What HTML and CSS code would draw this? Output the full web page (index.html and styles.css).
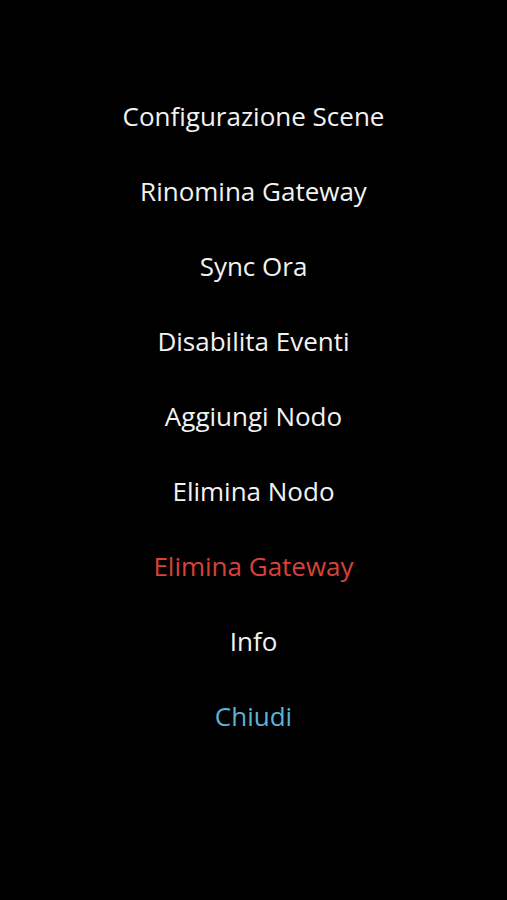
FILE: index.html
```html
<!DOCTYPE html>
<html lang="it">
<head>
<meta charset="utf-8">
<title>Menu</title>
<link rel="stylesheet" href="styles.css">
</head>
<body>
<nav class="menu">
  <div class="item">Configurazione Scene</div>
  <div class="item">Rinomina Gateway</div>
  <div class="item">Sync Ora</div>
  <div class="item">Disabilita Eventi</div>
  <div class="item">Aggiungi Nodo</div>
  <div class="item">Elimina Nodo</div>
  <div class="item danger">Elimina Gateway</div>
  <div class="item">Info</div>
  <div class="item close">Chiudi</div>
</nav>
</body>
</html>
```
FILE: styles.css
```css
html, body {
  margin: 0;
  padding: 0;
  background: #000;
  height: 100%;
}
body {
  font-family: "Open Sans", "Noto Sans", sans-serif;
  color: #f2f2f2;
}
.menu {
  display: flex;
  flex-direction: column;
  padding-top: 78px;
}
.item {
  height: 75px;
  display: flex;
  align-items: center;
  justify-content: center;
  font-size: 26px;
}
.danger { color: #d9413b; }
.close { color: #5bb3d5; }
```
